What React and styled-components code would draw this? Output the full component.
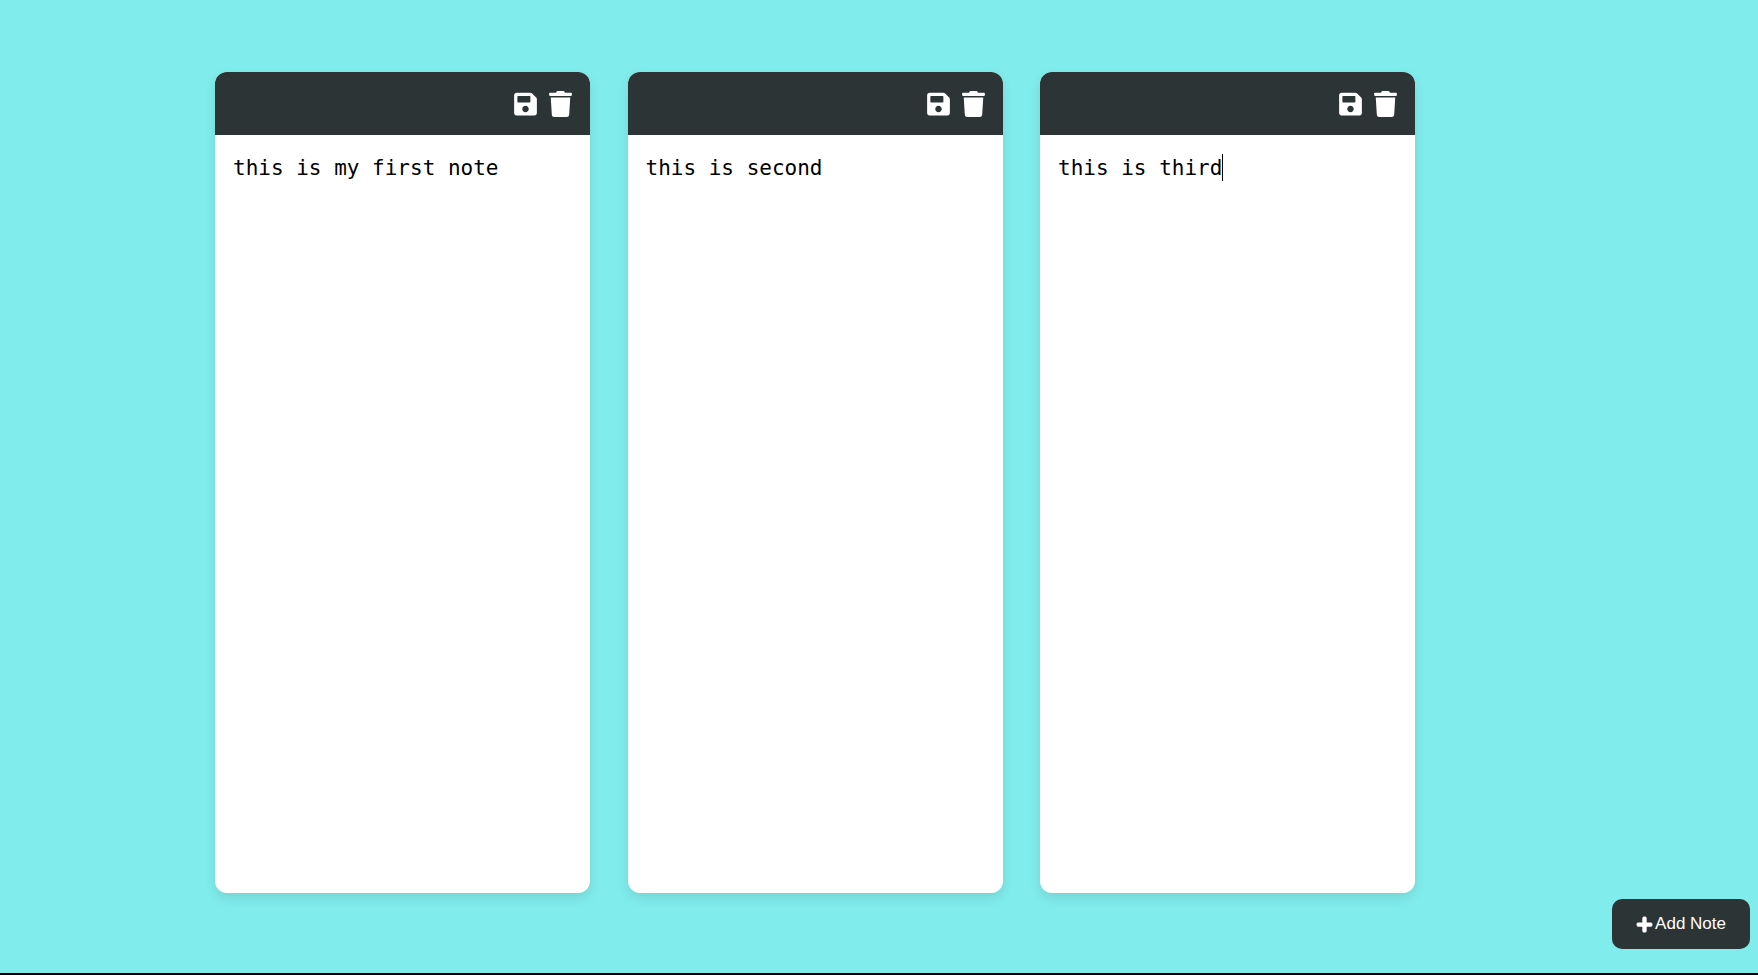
import React from 'react';
import styled, { createGlobalStyle } from 'styled-components';
import { FaPlus, FaSave, FaTrash } from 'react-icons/fa';

const GlobalStyle = createGlobalStyle`
  *, *::before, *::after { box-sizing: border-box; }
  body { margin: 0; background: #81ecec; }
`;

const Page = styled.div`
  display: flex;
  justify-content: center;
  min-height: 100vh;
  padding: 72px 16px 80px;
  border-bottom: 2px solid #000;
`;

const Notes = styled.main`
  display: grid;
  grid-template-columns: repeat(auto-fill, minmax(min(100%, 350px), 375px));
  gap: 37px;
  justify-content: space-between;
  width: 100%;
  max-width: 1328px;
  padding-right: 128px;
`;

const Note = styled.section`
  display: flex;
  flex-direction: column;
  min-height: 400px;
  border-radius: 12px;
  overflow: hidden;
  background: #fff;
  box-shadow: 0 5px 12px rgba(0, 0, 0, 0.1);
`;

const Toolbar = styled.header`
  display: flex;
  align-items: center;
  justify-content: flex-end;
  gap: 12px;
  height: 63px;
  padding: 0 18px;
  background: #2d3436;
`;

const IconButton = styled.button`
  display: flex;
  padding: 0;
  border: 0;
  background: none;
  color: #fff;
  cursor: pointer;

  svg { width: 23px; height: 26px; }
`;

const NoteBody = styled.div`
  position: relative;
  display: flex;
  flex: 1;
  color: #000;
  font: 21px/26px "DejaVu Sans Mono", monospace;
`;

const NoteText = styled.textarea`
  flex: 1;
  min-width: 0;
  padding: 20px 18px;
  border: 0;
  outline: 0;
  resize: none;
  background: transparent;
  color: inherit;
  font: inherit;
  caret-color: transparent;
`;

const Caret = styled.span`
  position: absolute;
  top: 19px;
  left: calc(18px + ${(props) => props.$column}ch);
  width: 1px;
  height: 27px;
  background: #000;
  pointer-events: none;
`;

const AddButton = styled.button`
  position: fixed;
  right: 8px;
  bottom: 26px;
  display: flex;
  align-items: center;
  gap: 2px;
  height: 50px;
  padding: 0 24px;
  border: 0;
  border-radius: 10px;
  background: #2d3436;
  color: #fff;
  font: 17px "Liberation Sans", Arial, sans-serif;
  cursor: pointer;

  svg {
    overflow: visible;
    stroke: currentColor;
    stroke-width: 32px;
  }
`;

const notes = ['this is my first note', 'this is second', 'this is third'];

export default function App() {
  const [texts, setTexts] = React.useState(notes);
  const [caret, setCaret] = React.useState({ note: 2, column: notes[2].length });

  const edit = (index, value) =>
    setTexts((current) => current.map((text, i) => (i === index ? value : text)));

  return (
    <>
      <GlobalStyle />
      <Page>
        <Notes>
          {texts.map((text, index) => (
            <Note key={index}>
              <Toolbar>
                <IconButton type="button" aria-label="Save note"><FaSave /></IconButton>
                <IconButton type="button" aria-label="Delete note"><FaTrash /></IconButton>
              </Toolbar>
              <NoteBody>
                <NoteText
                  aria-label={`Note ${index + 1}`}
                  value={text}
                  spellCheck={false}
                  onChange={(event) => edit(index, event.target.value)}
                  onSelect={(event) =>
                    setCaret({ note: index, column: event.target.selectionStart })
                  }
                />
                {caret.note === index && <Caret $column={caret.column} />}
              </NoteBody>
            </Note>
          ))}
        </Notes>
      </Page>
      <AddButton type="button"><FaPlus />Add Note</AddButton>
    </>
  );
}
